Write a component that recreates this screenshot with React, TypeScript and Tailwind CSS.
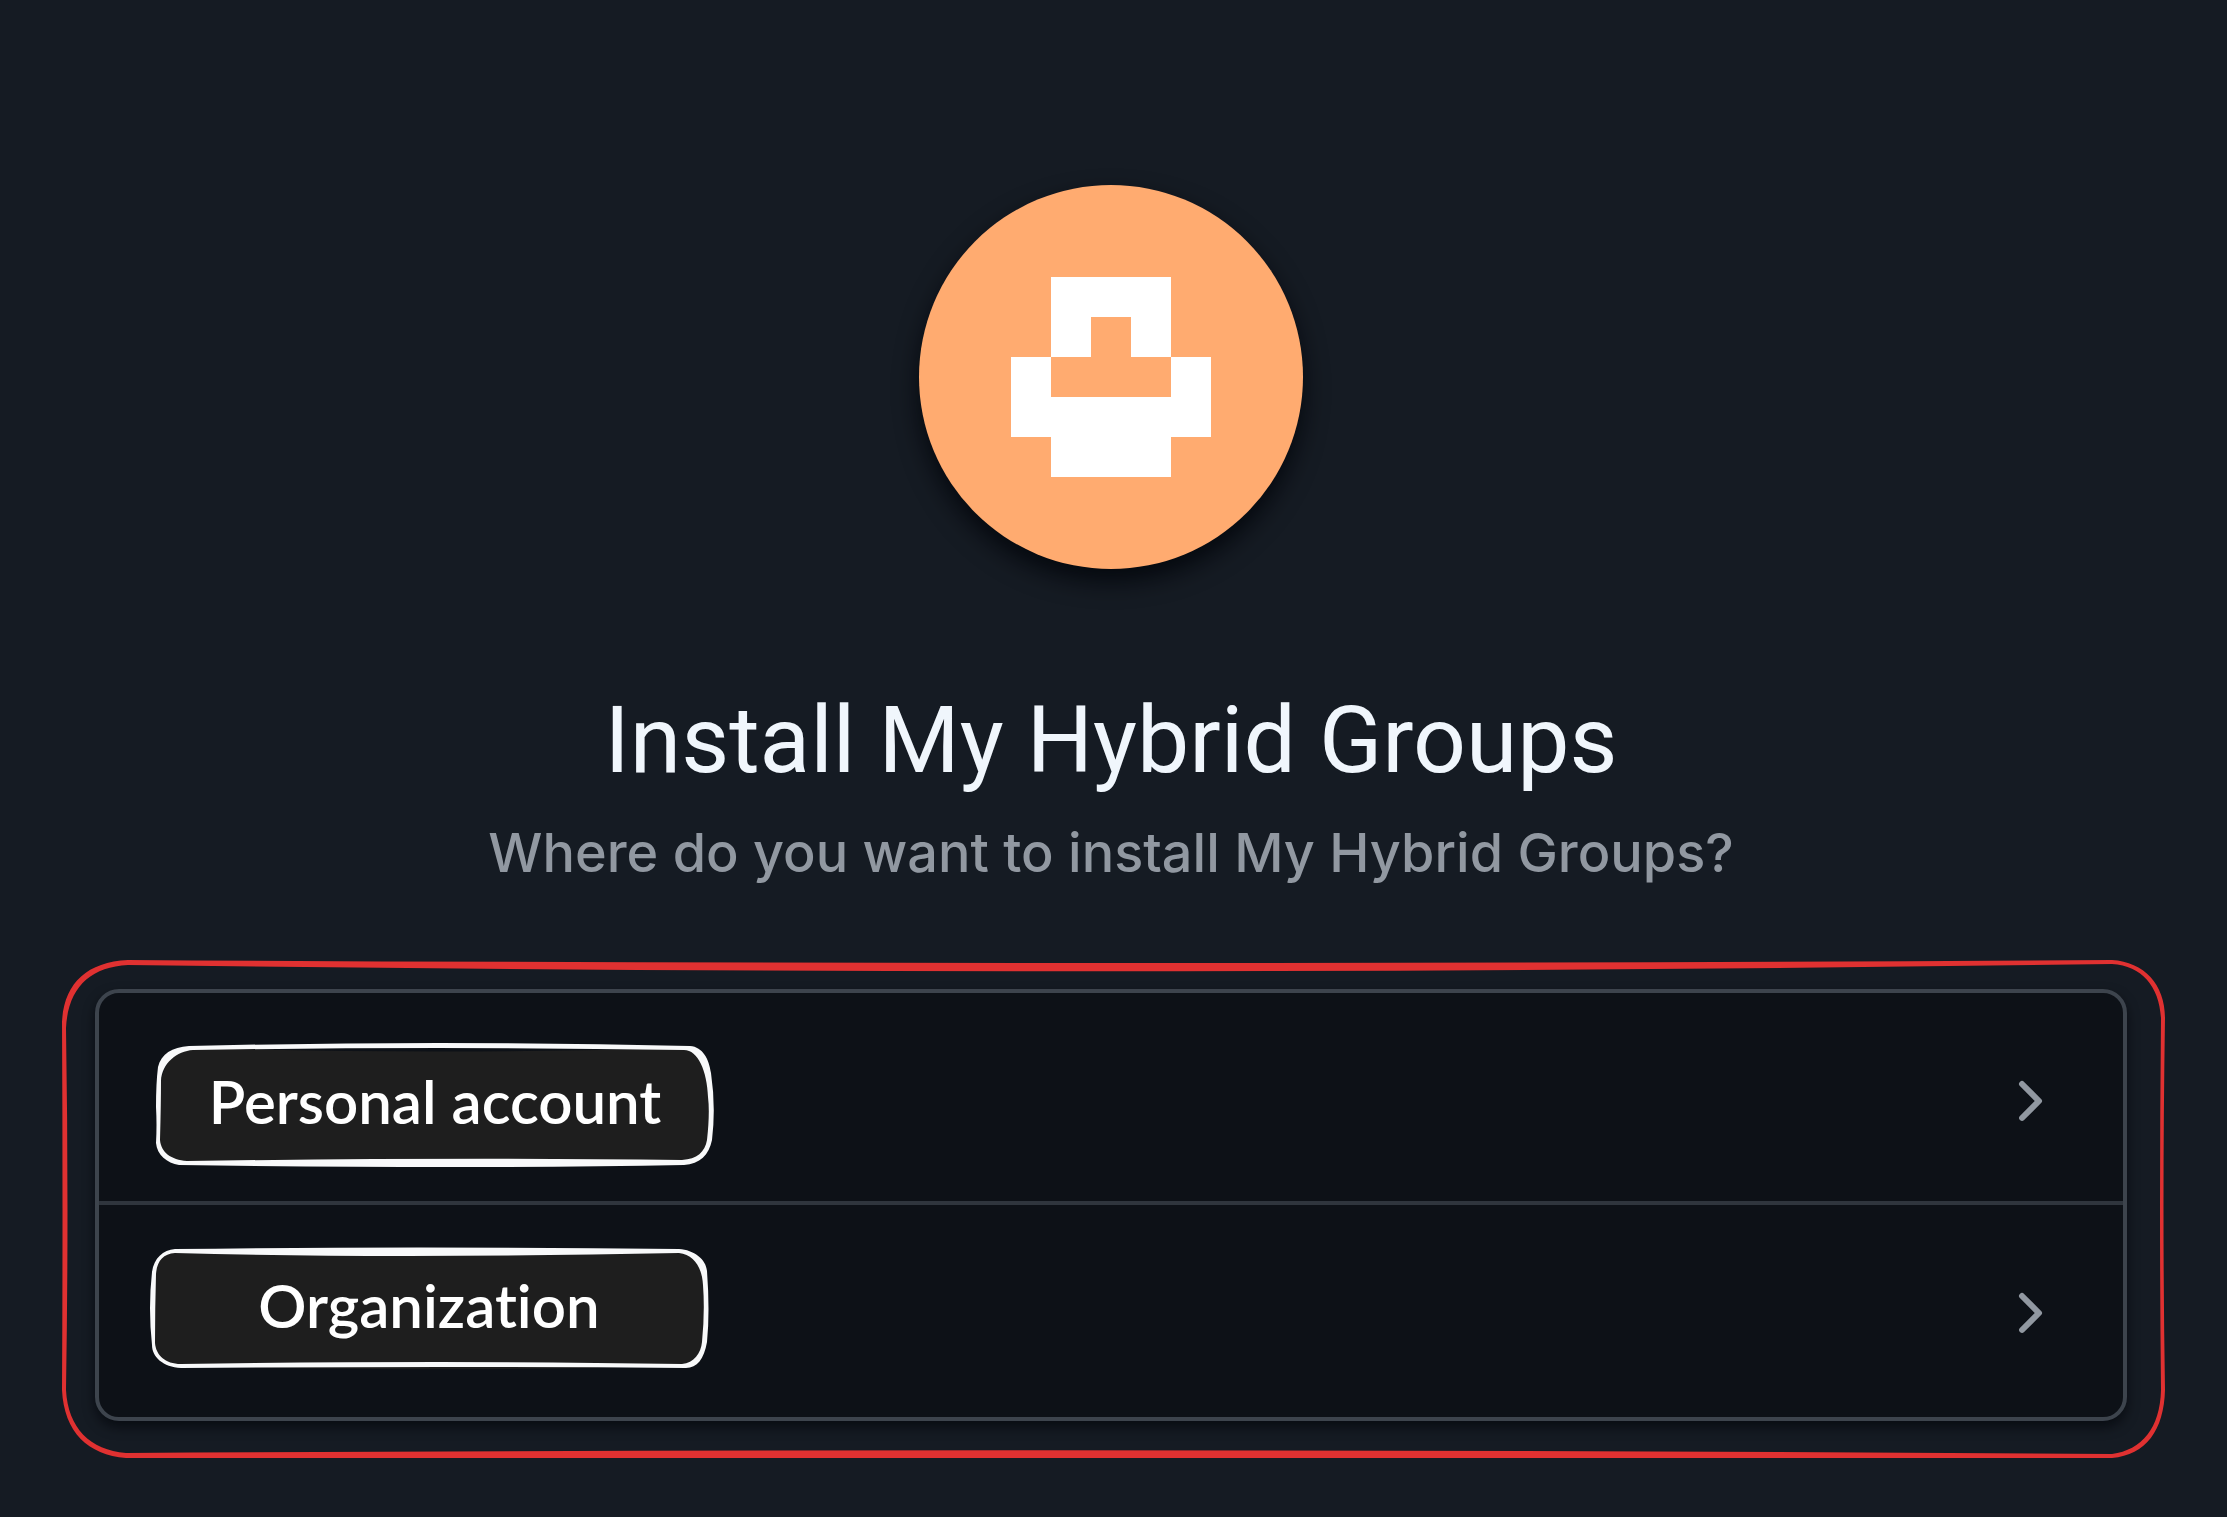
const CHEVRON =
  "M6.22 3.22a.75.75 0 0 1 1.06 0l4.25 4.25a.75.75 0 0 1 0 1.06l-4.25 4.25a.751.751 0 0 1-1.042-.018.751.751 0 0 1-.018-1.042L9.94 8 6.22 4.28a.75.75 0 0 1 0-1.06Z";

type Sketch = { fill: string; stroke: string };

/* Hand-drawn outlines: the stroke swells in the middle of the long sides. */
const PERSONAL_BOX: Sketch = {
  fill: "M38 5Q282 12 529 5Q551 8 555 54Q557 90 553 100Q548 119 527 120Q280 120 32 120Q8 116 4 97V54Q6 8 38 5Z",
  stroke:
    "M34 3Q282 -3 535 3C548 4 554 16 556 30Q561 64 557 97C554 112 545 121 529 122Q313 126 24 122C12 120 2 112 1 100Q2 82 1 64Q1 40 3 24C6 11 17 4 34 3ZM38 7C22 8 7 20 6 38Q6 60 5 97C6 109 16 117 32 118Q313 114 527 117C542 116 550 109 552 97Q555 70 553 54C552 28 543 7 529 7Q282 3 38 7Z",
};

const ORGANIZATION_BOX: Sketch = {
  fill: "M26 4Q280 5 530 4Q555 10 556 31V95Q552 117 533 118Q340 126 30 119Q6 114 5 98V30Q8 7 26 4Z",
  stroke:
    "M26 2Q262 -1 530 2C545 3 557 12 558 24Q561 65 558 95C555 112 548 121 537 121Q296 119 32 121C14 120 3 110 3 98Q-1 61 3 25C5 11 14 3 26 2ZM26 6C14 7 8 14 7 27Q6 61 6 96C7 108 16 117 32 117Q296 113 533 117C545 116 552 106 553 95Q556 65 554 38C553 20 545 8 530 6Q240 12 26 6Z",
};

function Avatar() {
  return (
    <div className="size-96 rounded-full bg-[#ffab70] shadow-[0_12px_24px_rgba(1,4,9,0.8)]">
      <svg viewBox="0 0 384 384" className="size-full" role="img" aria-label="My Hybrid Groups logo" shapeRendering="crispEdges">
        <path
          fill="#fff"
          d="M132 92h120v80h40v80h-40v40h-120v-40h-40v-80h40zM172 132v40h40v-40zM132 172v40h120v-40z"
          fillRule="evenodd"
        />
      </svg>
    </div>
  );
}

function SketchLabel({ text, sketch }: { text: string; sketch: Sketch }) {
  return (
    <span className="relative flex h-31 w-140 items-center justify-center">
      <svg viewBox="0 0 560 124" className="absolute inset-0 size-full overflow-visible" aria-hidden="true">
        <path d={sketch.fill} fill="#1e1e1e" />
        <path d={sketch.stroke} fill="#f8f9fa" fillRule="evenodd" />
      </svg>
      <span className="relative pb-2 font-['Lato',sans-serif] text-[60px] leading-none font-semibold text-white [font-variant-ligatures:none]">
        {text}
      </span>
    </span>
  );
}

function Chevron() {
  return (
    <svg viewBox="0 0 16 16" className="mr-2 size-16 fill-[#9198a1]" aria-hidden="true">
      <path d={CHEVRON} />
    </svg>
  );
}

function Highlight() {
  return (
    <svg
      viewBox="0 0 2103 498"
      preserveAspectRatio="none"
      className="pointer-events-none absolute -top-[29px] -left-[33px] h-[498px] w-[calc(100%+71px)] overflow-visible"
      aria-hidden="true"
    >
      <path
        fillRule="evenodd"
        fill="#e03131"
        d="M66 0Q1050 6 2050 0C2082 2 2103 24 2103 58Q2100 250 2103 430C2102 470 2084 495 2050 498Q1050 498 64 498C26 495 2 472 0 430Q1 250 0 62C2 24 24 2 66 0Z
           M66 5C28 7 6 28 4 68Q7 250 4 430C6 468 28 490 64 493Q1050 487 2050 494C2080 490 2098 468 2099 430Q2097 250 2099 58C2097 26 2080 6 2050 4Q1050 18 66 5Z"
      />
    </svg>
  );
}

export default function App() {
  return (
    <main className="flex min-h-screen flex-col items-center bg-[#151b23] pt-[185px] pr-25 pb-24 pl-[95px] font-['Inter',sans-serif]">
      <Avatar />
      <h1 className="mt-28 text-center font-['Roboto',sans-serif] text-[93px] leading-[120px] font-normal text-[#f0f6fc]">
        Install My Hybrid Groups
      </h1>
      <p className="mt-[10px] text-center text-[54px] leading-[84px] font-medium text-[#9198a1]">
        Where do you want to install My Hybrid Groups?
      </p>
      <div className="relative mt-[94px] w-full">
        <ul className="w-full rounded-3xl border-4 border-[#3d444d] bg-[#0d1117] shadow-[0_6px_12px_rgba(1,4,9,0.6)]">
          <li className="border-b-4 border-[#2f353d]">
            <a href="#personal" className="flex h-52 items-center justify-between px-14 pt-2">
              <span className="pt-2">
                <SketchLabel text="Personal account" sketch={PERSONAL_BOX} />
              </span>
              <Chevron />
            </a>
          </li>
          <li>
            <a href="#organization" className="flex h-53 items-center justify-between pt-1 pr-14 pl-[50px]">
              <span className="pb-2">
                <SketchLabel text="Organization" sketch={ORGANIZATION_BOX} />
              </span>
              <Chevron />
            </a>
          </li>
        </ul>
        <Highlight />
      </div>
    </main>
  );
}
